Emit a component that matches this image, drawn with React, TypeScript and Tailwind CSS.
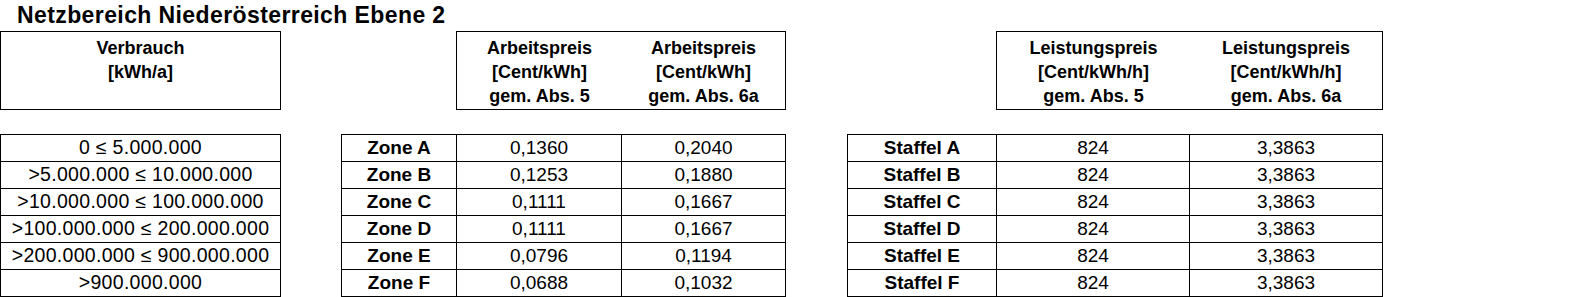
import React from 'react';

const font = { fontFamily: '"Liberation Sans", Arial, sans-serif' };

const verbrauch = [
    '0 ≤ 5.000.000',
    '>5.000.000 ≤ 10.000.000',
    '>10.000.000 ≤ 100.000.000',
    '>100.000.000 ≤ 200.000.000',
    '>200.000.000 ≤ 900.000.000',
    '>900.000.000',
];

const zones = [
    ['Zone A', '0,1360', '0,2040'],
    ['Zone B', '0,1253', '0,1880'],
    ['Zone C', '0,1111', '0,1667'],
    ['Zone D', '0,1111', '0,1667'],
    ['Zone E', '0,0796', '0,1194'],
    ['Zone F', '0,0688', '0,1032'],
];

const staffeln = ['A', 'B', 'C', 'D', 'E', 'F'].map((s) => [`Staffel ${s}`, '824', '3,3863']);

const HeaderCol: React.FC<{ lines: string[]; className: string }> = ({ lines, className }) => (
    <div className={`${className} flex flex-col items-center text-[18px] font-bold leading-[24px]`}>
        {lines.map((l) => (
            <span key={l}>{l}</span>
        ))}
    </div>
);

const App: React.FC = () => {
    return (
        <div className="w-[1577px] h-[297px] bg-white text-black overflow-hidden" style={font}>
            <h1 className="h-[31px] pl-[17px] text-[23px] font-bold leading-[31px] tracking-[0.4px]">
                Netzbereich Niederösterreich Ebene 2
            </h1>

            <div className="flex items-start">
                {/* Verbrauch */}
                <div className="w-[281px] flex flex-col">
                    <div className="h-[79px] border border-black pt-[4px]">
                        <HeaderCol className="w-full" lines={['Verbrauch', '[kWh/a]']} />
                    </div>
                    <div className="mt-[24px] border-l border-t border-black">
                        {verbrauch.map((v) => (
                            <div key={v} className="w-[280px] h-[27px] border-r border-b border-black flex items-center justify-center text-[19.5px] tracking-[0.3px]">
                                {v}
                            </div>
                        ))}
                    </div>
                </div>

                {/* Arbeitspreis */}
                <div className="ml-[60px] w-[445px] flex flex-col">
                    <div className="ml-[115px] w-[330px] h-[79px] border border-black pt-[4px] flex">
                        <HeaderCol className="w-[165px]" lines={['Arbeitspreis', '[Cent/kWh]', 'gem. Abs. 5']} />
                        <HeaderCol className="w-[163px]" lines={['Arbeitspreis', '[Cent/kWh]', 'gem. Abs. 6a']} />
                    </div>
                    <div className="mt-[24px] border-l border-t border-black">
                        {zones.map(([z, a, b]) => (
                            <div key={z} className="flex h-[27px] text-[19px]">
                                <div className="w-[115px] border-r border-b border-black flex items-center justify-center font-bold">{z}</div>
                                <div className="w-[165px] border-r border-b border-black flex items-center justify-center">{a}</div>
                                <div className="w-[164px] border-r border-b border-black flex items-center justify-center">{b}</div>
                            </div>
                        ))}
                    </div>
                </div>

                {/* Leistungspreis */}
                <div className="ml-[61px] w-[536px] flex flex-col">
                    <div className="ml-[149px] w-[387px] h-[79px] border border-black pt-[4px] flex">
                        <HeaderCol className="w-[193px]" lines={['Leistungspreis', '[Cent/kWh/h]', 'gem. Abs. 5']} />
                        <HeaderCol className="w-[192px]" lines={['Leistungspreis', '[Cent/kWh/h]', 'gem. Abs. 6a']} />
                    </div>
                    <div className="mt-[24px] border-l border-t border-black">
                        {staffeln.map(([s, a, b]) => (
                            <div key={s} className="flex h-[27px] text-[19px]">
                                <div className="w-[149px] border-r border-b border-black flex items-center justify-center font-bold">{s}</div>
                                <div className="w-[193px] border-r border-b border-black flex items-center justify-center">{a}</div>
                                <div className="w-[193px] border-r border-b border-black flex items-center justify-center">{b}</div>
                            </div>
                        ))}
                    </div>
                </div>
            </div>
        </div>
    );
};

export default App;
